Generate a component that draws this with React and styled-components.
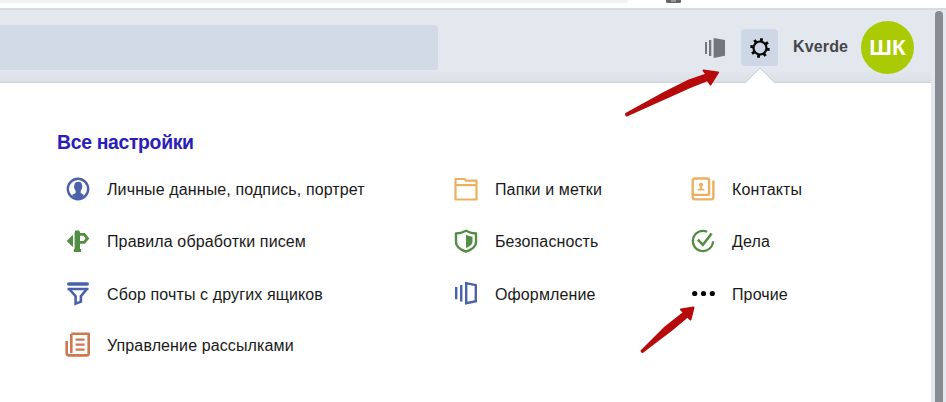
import React from 'react';
import styled, { createGlobalStyle } from 'styled-components';

const GlobalStyle = createGlobalStyle`
  * { box-sizing: border-box; }
  body { margin: 0; background: #fff; overflow: hidden; font-family: "Liberation Sans", Arial, sans-serif; }
`;

const Page = styled.div`
  position: relative;
  width: 946px;
  height: 402px;
  overflow: hidden;
  display: flex;
  flex-direction: column;
  background: #fff;
`;

const BrowserStrip = styled.div`
  flex: none;
  display: flex;
  align-items: flex-start;
  height: 10px;
  border-bottom: 2px solid #d9dadf;
`;

const AddressBar = styled.div`
  width: 628px;
  height: 3px;
  background: #f1f2f3;
  border-bottom-right-radius: 4px;
`;

const ExtensionIcon = styled.svg`
  margin-left: 37px;
`;

const Viewport = styled.div`
  flex: 1;
  display: flex;
  min-height: 0;
  background: #e3e8ef;
`;

const Main = styled.main`
  width: 931px;
  display: flex;
  flex-direction: column;
`;

const Header = styled.header`
  flex: none;
  display: flex;
  height: 73px;
  background: linear-gradient(#e3e8ef 0, #e3e8ef 60px, #dbe0e7 100%);
  border-bottom: 1px solid #ced3d8;
`;

const SearchField = styled.div`
  width: 438px;
  height: 45px;
  margin-top: 15px;
  border-radius: 0 4px 4px 0;
  background: #d2dae6;
`;

const Tools = styled.div`
  display: flex;
  align-items: center;
  height: 75px;
  margin-left: auto;
  padding-right: 17px;
`;

const ThemeIcon = styled.svg`
  margin-right: 15px;
`;

const SettingsButton = styled.div`
  position: relative;
  display: flex;
  align-items: center;
  justify-content: center;
  width: 37px;
  height: 37px;
  border-radius: 4px;
  background: #cdd7e6;
`;

const Pointer = styled.svg`
  position: absolute;
  top: 38px;
  left: 3px;
`;

const UserName = styled.span`
  width: 56px;
  margin: -2px 12px 0 15px;
  font-size: 16px;
  line-height: 20px;
  font-weight: bold;
  letter-spacing: 0.15px;
  color: #444649;
  white-space: nowrap;
`;

const Avatar = styled.div`
  width: 53px;
  height: 53px;
  border-radius: 50%;
  background: #aacb04;
  color: #fff;
  font-size: 22.5px;
  line-height: 54px;
  font-weight: bold;
  text-align: center;
`;

const Panel = styled.section`
  flex: 1;
  padding: 47px 0 0 57px;
  background: #fff;
`;

const Title = styled.h1`
  margin: 0 0 22px;
  font-size: 19.4px;
  line-height: 24px;
  letter-spacing: -0.33px;
  color: #2a20b8;
`;

const Columns = styled.div`
  display: grid;
  grid-template-columns: 388px 237px 220px;
`;

const Column = styled.div`
  display: grid;
  grid-template-rows: 52px 53px 51px 52px;
  align-content: start;
  padding-left: 8px;
`;

const Item = styled.div`
  display: flex;
  align-items: flex-start;
  gap: 16px;
  height: 26px;
  font-size: 16px;
  line-height: 28px;
  letter-spacing: 0.12px;
  color: #191919;
  white-space: nowrap;
`;

const ItemIcon = styled.svg`
  flex: none;
  width: 26px;
  height: 26px;
  fill: none;
  stroke-width: 2.4;
  stroke: ${(p) => p.$tone};
  color: ${(p) => p.$tone};
`;

const Gutter = styled.div`
  flex: 1;
  padding: 1px 0 0 4px;
`;

const ScrollThumb = styled.div`
  width: 8px;
  height: 400px;
  border-radius: 4px 4px 0 0;
  background: #878b92;
`;

const Arrows = styled.svg`
  position: absolute;
  inset: 0;
  pointer-events: none;
`;

const BLUE = '#4a62a9';
const ORANGE = '#edb062';
const GREEN = '#538c43';
const RUST = '#cf7850';

const icons = {
  person: (
    <>
      <circle cx="13" cy="13" r="10.2" />
      <path stroke="none" fill="currentColor" d="M9.1 10.5c0-3 1.5-4.8 4.1-4.8s4.1 1.8 4.1 4.8c0 2-.9 3.4-1.6 4.4v2.2l3.3 1.9c-1.5 2.1-3.5 3.5-6 3.5s-4.5-1.4-6-3.5l3.7-1.9v-2.2c-.8-1-1.6-2.4-1.6-4.4z" />
    </>
  ),
  rules: (
    <>
      <path stroke="none" fill="currentColor" d="M9.6 4.2q0-2 2.7-2T15 4.2V21h1v3H8.8v-3h.8zM8 7v12l-1.6-1.2-4.2-4.2q-.6-.6 0-1.2l4.2-4.2z" />
      <path strokeWidth="2.9" d="M13 6.4h6.2l3.2 4-3.2 4H13" />
    </>
  ),
  funnel: (
    <g transform="translate(0 -.8)">
      <path strokeWidth="3.6" strokeLinecap="round" d="M3.8 3.8h18.4" />
      <path d="M2.5 8.8h21M4.2 8.8l6.4 7.2v7.5l5.3-2V16l6-7.2" strokeWidth="2.6" />
    </g>
  ),
  news: (
    <>
      <path strokeLinejoin="round" strokeWidth="2.6" d="M6.3 1.8h17.4v19.4q0 2.2-2.2 2.2H4q-2.3 0-2.3-2.2V9M6.3 2v19" />
      <path strokeWidth="2.3" d="M10.6 7.7h9M10.6 12.7h9M10.6 17.6h9" />
    </>
  ),
  folder: <path strokeLinejoin="round" strokeWidth="2.2" d="M2.5 3h9l1.6 1.6h10.4V23.5h-21zM2.5 9.2h21" />,
  shield: (
    <>
      <path strokeLinejoin="round" d="M13 2.7q5 2.7 10 2.8v8.7c0 4-4.2 7.4-10 9.5-5.8-2.1-10-5.5-10-9.5V5.5q5-.1 10-2.8z" />
      <path stroke="none" fill="currentColor" d="M13 6.7q3 1.6 6.5 2v5.2c0 2.5-2.6 4.3-6.5 6z" />
    </>
  ),
  theme: (
    <g transform="translate(0 -.8)">
      <path strokeWidth="2.4" d="M3.2 6.7v12.4M8.2 4.7v16.6" />
      <path d="M13.2 3l9.6 2v16l-9.6 2z" />
    </g>
  ),
  contacts: (
    <>
      <rect x="2.7" y="2.5" width="16.4" height="16.4" rx="1.8" strokeWidth="2.4" />
      <path strokeWidth="2.4" d="M2.7 17v4q0 2.4 2.4 2.4h16q2.3 0 2.3-2.4V4.4" />
      <circle cx="11" cy="8.9" r="2.1" stroke="none" fill="currentColor" />
      <path stroke="none" fill="currentColor" d="M10 10.5h2v2l2.3.8v1.3H7.7v-1.3l2.3-.8z" />
    </>
  ),
  done: (
    <>
      <path d="M17.1 3.8A10.1 10.1 0 1 0 23 13.2" strokeWidth="2.2" />
      <path d="M7.8 11.6l5.1 5.2L21.6 5.6" strokeWidth="2.5" />
    </>
  ),
  more: (
    <g stroke="none" fill="currentColor">
      <circle cx="4.7" cy="12.5" r="2.6" />
      <circle cx="13.5" cy="12.5" r="2.6" />
      <circle cx="22.3" cy="12.5" r="2.6" />
    </g>
  ),
};

const columns = [
  [
    ['person', BLUE, 'Личные данные, подпись, портрет'],
    ['rules', GREEN, 'Правила обработки писем'],
    ['funnel', BLUE, 'Сбор почты с других ящиков'],
    ['news', RUST, 'Управление рассылками'],
  ],
  [
    ['folder', ORANGE, 'Папки и метки'],
    ['shield', GREEN, 'Безопасность'],
    ['theme', BLUE, 'Оформление'],
  ],
  [
    ['contacts', ORANGE, 'Контакты'],
    ['done', GREEN, 'Дела'],
    ['more', '#050505', 'Прочие'],
  ],
];

const teeth = [0, 45, 90, 135, 180, 225, 270, 315];

export default function App() {
  return (
    <Page>
      <GlobalStyle />
      <BrowserStrip>
        <AddressBar />
        <ExtensionIcon width="18" height="4">
          <path d="M1 0h15v1.5q0 1.5-1.5 1.5h-12Q1 3 1 1.5z" fill="#626466" />
          <path d="M6 1h5" stroke="#c9cacb" />
        </ExtensionIcon>
      </BrowserStrip>
      <Viewport>
        <Main>
          <Header>
            <SearchField />
            <Tools>
              <ThemeIcon width="22" height="22" fill="#72777c">
                <rect x="1" y="5" width="2" height="12" />
                <rect x="5" y="3" width="2.3" height="16" />
                <path d="M9.6 1L21 3.1v15.6L9.6 21z" />
              </ThemeIcon>
              <SettingsButton>
                <svg width="22" height="22" fill="none" stroke="#080808">
                  <circle cx="11" cy="11" r="6.5" strokeWidth="2.2" />
                  {teeth.map((a) => (
                    <path key={a} d="M11 1.2v3.3" strokeWidth="2.8" transform={`rotate(${a + 10} 11 11)`} />
                  ))}
                </svg>
                <Pointer width="32" height="18">
                  <path d="M1 16.5L16 1.5l15 15V18H1z" fill="#fff" />
                  <path d="M1 16L16 1l15 15" fill="none" stroke="#c9ced5" />
                </Pointer>
              </SettingsButton>
              <UserName>Kverde</UserName>
              <Avatar>ШК</Avatar>
            </Tools>
          </Header>
          <Panel>
            <Title>Все настройки</Title>
            <Columns>
              {columns.map((items, i) => (
                <Column key={i}>
                  {items.map(([icon, tone, label]) => (
                    <Item key={icon}>
                      <ItemIcon viewBox="0 0 26 26" $tone={tone}>{icons[icon]}</ItemIcon>
                      {label}
                    </Item>
                  ))}
                </Column>
              ))}
            </Columns>
          </Panel>
        </Main>
        <Gutter>
          <ScrollThumb />
        </Gutter>
      </Viewport>
      <Arrows width="946" height="402" fill="#b70a0b" stroke="#b70a0b" strokeWidth="2" strokeLinejoin="round">
        <path d="M626 114L665 92.500 689 80.500 706.500 74.500 703.500 70.500 718 72.500 710.500 84.500 707.500 80 690 87 626.500 115.500z" />
        <path d="M641.500 351L665 327.500 684 312.500 681 309.500 693.500 307.500 690.500 319.500 687.500 316.500 672 329.500 642.500 352z" />
      </Arrows>
    </Page>
  );
}
